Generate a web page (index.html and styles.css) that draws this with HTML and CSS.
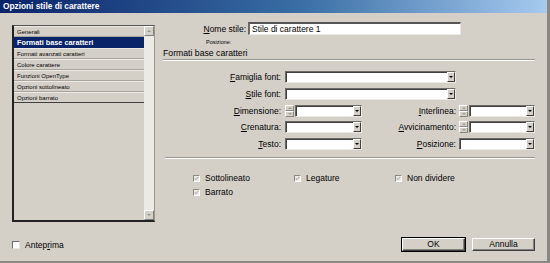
FILE: index.html
```html
<!doctype html>
<html>
  <head>
    <meta charset="utf-8">
    <title>Opzioni stile di carattere</title>
    <link rel="stylesheet" href="styles.css">
  </head>
  <body>
    <div class="window">
      <div class="titlebar">Opzioni stile di carattere</div>
      <div class="body">

        <div class="side">
          <div class="list">
            <ul class="items">
              <li>Generali</li>
              <li class="sel">Formati base caratteri</li>
              <li>Formati avanzati caratteri</li>
              <li>Colore carattere</li>
              <li>Funzioni OpenType</li>
              <li>Opzioni sottolineato</li>
              <li class="last">Opzioni barrato</li>
            </ul>
            <div class="scroll">
              <span class="arrow up"></span>
              <span class="track"></span>
              <span class="arrow down"></span>
            </div>
          </div>
          <div class="preview">
            <span class="box white"></span>
            <span>Antep<u>r</u>ima</span>
          </div>
        </div>

        <div class="main">
          <div class="name-row">
            <span class="name-lbl"><u>N</u>ome stile:</span>
            <span class="text-input">Stile di carattere 1</span>
          </div>
          <div class="stray">Posizione:</div>
          <div class="section">Formati base caratteri</div>

          <div class="fields">
            <span class="lbl l1"><u>F</u>amiglia font:</span>
            <span class="combo wide"><span class="drop"></span></span>

            <span class="lbl l1"><u>S</u>tile font:</span>
            <span class="combo wide"><span class="drop"></span></span>

            <span class="lbl l1"><u>D</u>imensione:</span>
            <span class="spin-combo">
              <span class="spin"><i class="s-up"></i><i class="s-down"></i></span>
              <span class="combo"><span class="drop"></span></span>
            </span>
            <span class="lbl l2"><u>I</u>nterlinea:</span>
            <span class="spin-combo">
              <span class="spin"><i class="s-up"></i><i class="s-down"></i></span>
              <span class="combo"><span class="drop"></span></span>
            </span>

            <span class="lbl l1"><u>C</u>renatura:</span>
            <span class="combo"><span class="drop"></span></span>
            <span class="lbl l2"><u>A</u>vvicinamento:</span>
            <span class="spin-combo">
              <span class="spin"><i class="s-up"></i><i class="s-down"></i></span>
              <span class="combo"><span class="drop"></span></span>
            </span>

            <span class="lbl l1"><u>T</u>esto:</span>
            <span class="combo"><span class="drop"></span></span>
            <span class="lbl l2"><u>P</u>osizione:</span>
            <span class="combo"><span class="drop"></span></span>
          </div>

          <div class="sep"></div>

          <div class="checks">
            <span class="check"><span class="box"><svg viewBox="0 0 7 7"><path d="M1 3.2 L2.8 5 L6 1.4" /></svg></span>Sottolineato</span>
            <span class="check"><span class="box"><svg viewBox="0 0 7 7"><path d="M1 3.2 L2.8 5 L6 1.4" /></svg></span>Legature</span>
            <span class="check"><span class="box"><svg viewBox="0 0 7 7"><path d="M1 3.2 L2.8 5 L6 1.4" /></svg></span>Non dividere</span>
            <span class="check"><span class="box"><svg viewBox="0 0 7 7"><path d="M1 3.2 L2.8 5 L6 1.4" /></svg></span>Barrato</span>
          </div>

          <div class="buttons">
            <span class="btn default">OK</span>
            <span class="btn">Annulla</span>
          </div>
        </div>

      </div>
    </div>
  </body>
</html>
```

FILE: styles.css
```css
body {
  margin: 0;
  background: #d4d0c8;
  font-family: "Liberation Sans", Arial, sans-serif;
  color: #000;
}

.window {
  width: 550px;
  height: 263px;
  box-sizing: border-box;
  border-right: 3px solid #8a8883;
  border-bottom: 2px solid #8a8883;
  display: flex;
  flex-direction: column;
}

.titlebar {
  height: 13px;
  line-height: 13px;
  padding-left: 3px;
  color: #fff;
  font-weight: bold;
  font-size: 8.3px;
  background: linear-gradient(to right, #0a246a 0%, #3a6ea5 55%, #a6caf0 100%);
}

.body {
  flex: 1;
  display: flex;
}

/* left column */

.side {
  width: 143px;
  margin-left: 12px;
  padding-top: 12px;
  display: flex;
  flex-direction: column;
}

.list {
  height: 197px;
  box-sizing: border-box;
  border-style: solid;
  border-width: 1px 1px 2px 2px;
  border-color: #555 #9a978f #222 #222;
  display: flex;
}

.items {
  flex: 1;
  margin: 0;
  padding: 0;
  list-style: none;
}

.items li {
  height: 11px;
  box-sizing: border-box;
  line-height: 10px;
  padding-left: 3px;
  font-size: 6px;
  border-top: 1px solid #eceae4;
  border-bottom: 1px solid #a9a69e;
}

.items li.sel {
  background: #0a246a;
  color: #fff;
  font-weight: bold;
  font-size: 7.3px;
  border-color: #0a246a;
}

.items li.last {
  border-bottom-color: #404040;
}

.scroll {
  width: 10px;
  display: flex;
  flex-direction: column;
  background: #eceae5;
}

.scroll .track {
  flex: 1;
}

.arrow {
  height: 10px;
  box-sizing: border-box;
  background: #d4d0c8;
  border: 1px solid;
  border-color: #fff #808080 #808080 #fff;
  position: relative;
}

.arrow::after {
  content: "";
  position: absolute;
  left: 2px;
  top: 3px;
  border-left: 2px solid transparent;
  border-right: 2px solid transparent;
}

.arrow.up::after {
  border-bottom: 2px solid #9a978f;
}

.arrow.down::after {
  border-top: 2px solid #9a978f;
}

.preview {
  margin-top: 18px;
  display: flex;
  align-items: center;
  gap: 5px;
  font-size: 8.5px;
  height: 9px;
}

/* checkboxes */

.box {
  width: 7px;
  height: 7px;
  box-sizing: border-box;
  background: #edebe6;
  border-style: solid;
  border-width: 1px;
  border-color: #8a8883 #fff #fff #8a8883;
  display: inline-flex;
}

.box.white {
  width: 8px;
  height: 8px;
  background: #fff;
  border-color: #6d6b66 #e8e6e0 #e8e6e0 #6d6b66;
}

.box svg {
  width: 5px;
  height: 5px;
}

.box path {
  fill: none;
  stroke: #8a8883;
  stroke-width: 1.2;
}

/* right column */

.main {
  width: 372px;
  margin-left: 8px;
  padding-top: 9px;
  padding-bottom: 10px;
  display: flex;
  flex-direction: column;
  font-size: 8.5px;
}

.name-row {
  display: flex;
  align-items: center;
  height: 13px;
}

.name-lbl {
  width: 83px;
  text-align: right;
}

.text-input {
  margin-left: 2px;
  width: 213px;
  height: 13px;
  box-sizing: border-box;
  line-height: 10px;
  padding-left: 2px;
  background: #fff;
  border-style: solid;
  border-width: 2px 1px 1px 2px;
  border-color: #555 #eceae4 #eceae4 #6d6b66;
}

.stray {
  margin-top: 4px;
  margin-left: 43px;
  height: 7px;
  line-height: 7px;
  font-size: 5.5px;
}

.section {
  margin-top: 1px;
  height: 12px;
  line-height: 12px;
  font-size: 8.7px;
  border-bottom: 1px solid #9a978f;
  box-shadow: 0 1px 0 #fff;
}

.fields {
  margin-top: 11px;
  display: grid;
  grid-template-columns: 122px 77px 97px 76px;
  grid-auto-rows: 12px;
  row-gap: 4.75px;
}

.lbl {
  line-height: 12px;
  text-align: right;
  white-space: nowrap;
}

.l1 {
  grid-column: 1;
  padding-right: 4px;
}

.l2 {
  padding-right: 3px;
}

.combo {
  display: flex;
  justify-content: flex-end;
  box-sizing: border-box;
  height: 12px;
  background: #fff;
  border-style: solid;
  border-width: 1px;
  border-color: #6d6b66 #eceae4 #eceae4 #6d6b66;
  box-shadow: inset 1px 1px 0 #404040;
}

.combo.wide {
  grid-column: 2 / 4;
  margin-right: 3px;
}

.drop {
  width: 8px;
  box-sizing: border-box;
  background: #d4d0c8;
  border: 1px solid;
  border-color: #fff #404040 #404040 #fff;
  position: relative;
}

.drop::after {
  content: "";
  position: absolute;
  left: 1px;
  top: 3px;
  border-left: 2px solid transparent;
  border-right: 2px solid transparent;
  border-top: 2px solid #000;
}

.spin-combo {
  display: flex;
  gap: 1px;
}

.spin-combo .combo {
  flex: 1;
}

.spin {
  width: 9px;
  display: flex;
  flex-direction: column;
}

.spin i {
  flex: 1;
  background: #d4d0c8;
  border: 1px solid;
  border-color: #fff #8a8883 #8a8883 #fff;
  position: relative;
}

.spin i::after {
  content: "";
  position: absolute;
  left: 2px;
  top: 1px;
  border-left: 2px solid transparent;
  border-right: 2px solid transparent;
}

.s-up::after {
  border-bottom: 2px solid #a09d96;
}

.s-down::after {
  border-top: 2px solid #a09d96;
}

.sep {
  margin-top: 7px;
  margin-left: 2px;
  height: 1px;
  background: #9a978f;
  border-bottom: 1px solid #fff;
}

.checks {
  margin-top: 15px;
  padding-left: 30px;
  display: grid;
  grid-template-columns: 101px 101px 101px;
  grid-auto-rows: 8px;
  row-gap: 6px;
}

.check {
  display: flex;
  align-items: center;
  gap: 5px;
  white-space: nowrap;
}

.buttons {
  margin-top: auto;
  display: flex;
  justify-content: flex-end;
  gap: 7px;
}

.btn {
  width: 63px;
  height: 13px;
  box-sizing: border-box;
  line-height: 11px;
  text-align: center;
  background: #d4d0c8;
  border: 1px solid;
  border-color: #fff #404040 #404040 #fff;
  box-shadow: inset -1px -1px 0 #808080;
}

.btn.default {
  outline: 1px solid #000;
}
```
